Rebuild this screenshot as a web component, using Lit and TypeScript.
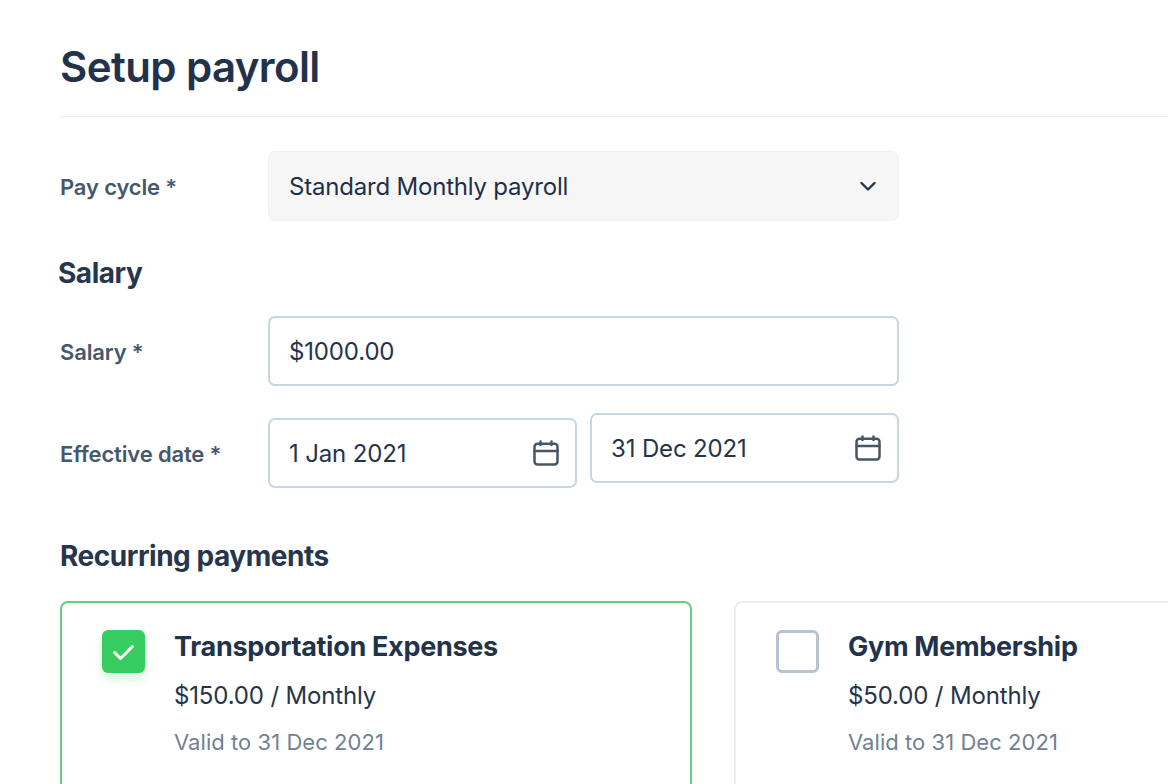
import { LitElement, html, css, svg } from "lit";
import { customElement } from "lit/decorators.js";

const calendar = html`<svg class="cal" viewBox="0 0 26 26" fill="none" stroke="#475667" stroke-width="2.5" stroke-linecap="round" stroke-linejoin="round">
  ${svg`<rect x="1.5" y="3.8" width="23" height="20.7" rx="3"></rect><path d="M1.5 11h23M7.5 1.5v3.5M18.5 1.5v3.5"></path>`}
</svg>`;

@customElement("app-root")
export class AppRoot extends LitElement {
  static styles = css`
    :host {
      display: block;
      width: 1168px;
      height: 784px;
      overflow: hidden;
      background: #fff;
      font-family: Inter, "Noto Sans", sans-serif;
      color: #1f2f47;
    }
    .page { padding: 0 0 0 60px; width: 1300px; box-sizing: border-box; }
    h1 {
      margin: 0;
      height: 117px;
      box-sizing: border-box;
      padding-top: 40px;
      font-size: 42px;
      line-height: 54px;
      font-weight: 600;
      letter-spacing: -0.6px;
      color: #22324a;
      border-bottom: 1px solid #eff0f2;
    }
    .row { display: flex; align-items: center; }
    .label {
      width: 208px;
      flex: none;
      padding-top: 2px;
      font-size: 22px;
      font-weight: 600;
      letter-spacing: -0.15px;
      color: #46586b;
    }
    .field {
      box-sizing: border-box;
      width: 631px;
      height: 70px;
      padding: 0 16px 0 19px;
      display: flex;
      align-items: center;
      justify-content: space-between;
      border: 2px solid #c8d6e3;
      border-radius: 7px;
      background: #fff;
      font-size: 24px;
      letter-spacing: -0.15px;
      color: #25344a;
    }
    .select {
      background: #f6f6f7;
      border: 1px solid #eff0f1;
      padding: 0 21px 0 20px;
      letter-spacing: -0.2px;
      color: #1f2f47;
    }
    .first { margin-top: 34px; }
    h2 {
      margin: 0;
      font-size: 28px;
      font-weight: 700;
      letter-spacing: -0.47px;
      color: #26364c;
    }
    .salary { margin: 35px 0 0 -2px; line-height: 34px; }
    .salary-row { margin-top: 26px; }
    .dates { margin-top: 32px; align-items: flex-start; }
    .dates .label { align-self: center; }
    .dates .pair { display: flex; gap: 13px; }
    .dates .field { width: 309px; }
    .dates .up { margin-top: -5px; }
    .cal { width: 26px; height: 26px; flex: none; }
    .chev { width: 18px; height: 11px; flex: none; }
    .rec { margin: 51px 0 0; line-height: 34px; }
    .cards { display: flex; gap: 42px; margin-top: 28px; }
    .card {
      box-sizing: border-box;
      flex: none;
      width: 632px;
      height: 260px;
      display: flex;
      gap: 29px;
      padding: 27px 40px;
      border: 2px solid #eceef0;
      border-radius: 8px;
    }
    .card.on { border-color: #62cf82; }
    .box {
      box-sizing: border-box;
      flex: none;
      width: 43px;
      height: 43px;
      border: 3px solid #b9c2cf;
      border-radius: 6px;
      background: #fff;
      display: flex;
      align-items: center;
      justify-content: center;
    }
    .box.on {
      border: none;
      background: #37cc5f;
      box-shadow: 0 6px 10px rgba(55, 204, 95, 0.22);
    }
    .box svg { width: 23px; height: 18px; }
    .title {
      font-size: 27px;
      font-weight: 700;
      line-height: 34px;
      letter-spacing: -0.3px;
      color: #22324a;
    }
    .price {
      margin-top: 16px;
      font-size: 24px;
      line-height: 32px;
      letter-spacing: -0.15px;
      color: #25344a;
    }
    .valid {
      margin-top: 14px;
      font-size: 22px;
      line-height: 32px;
      letter-spacing: 0.05px;
      color: #6f8293;
    }
  `;

  private card(title: string, price: string, on: boolean) {
    return html`<div class="card ${on ? "on" : ""}">
      <div class="box ${on ? "on" : ""}">
        ${on
          ? html`<svg viewBox="0 0 23 18" fill="none" stroke="#fff" stroke-width="3" stroke-linecap="round" stroke-linejoin="round"><path d="M2.5 9.5l6 6 12-12"></path></svg>`
          : ""}
      </div>
      <div>
        <div class="title">${title}</div>
        <div class="price">${price}</div>
        <div class="valid">Valid to 31 Dec 2021</div>
      </div>
    </div>`;
  }

  render() {
    return html`<div class="page">
      <h1>Setup payroll</h1>
      <div class="row first">
        <div class="label">Pay cycle *</div>
        <div class="field select">
          <span>Standard Monthly payroll</span>
          <svg class="chev" viewBox="0 0 18 11" fill="none" stroke="#25344a" stroke-width="2.4" stroke-linecap="round" stroke-linejoin="round"><path d="M2.5 2l6.5 6.5L15.5 2"></path></svg>
        </div>
      </div>
      <h2 class="salary">Salary</h2>
      <div class="row salary-row">
        <div class="label">Salary *</div>
        <div class="field">$1000.00</div>
      </div>
      <div class="row dates">
        <div class="label">Effective date *</div>
        <div class="pair">
          <div class="field"><span>1 Jan 2021</span>${calendar}</div>
          <div class="field up"><span>31 Dec 2021</span>${calendar}</div>
        </div>
      </div>
      <h2 class="rec">Recurring payments</h2>
      <div class="cards">
        ${this.card("Transportation Expenses", "$150.00 / Monthly", true)}
        ${this.card("Gym Membership", "$50.00 / Monthly", false)}
      </div>
    </div>`;
  }
}
